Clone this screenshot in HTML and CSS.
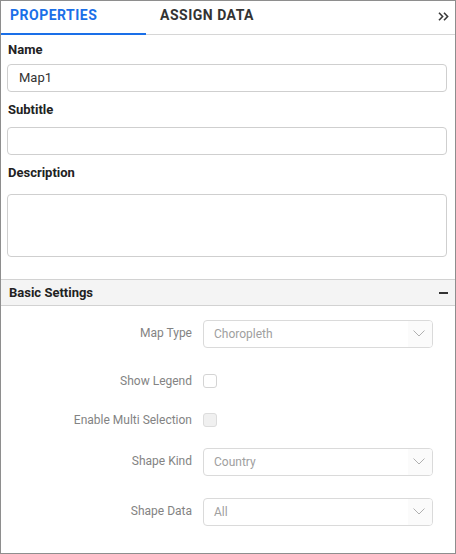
FILE: index.html
```html
<!DOCTYPE html>
<html>
<head>
<meta charset="utf-8">
<link rel="stylesheet" href="styles.css">
</head>
<body>
<div class="panel">
  <div class="tabs">
    <div class="tab active">PROPERTIES</div>
    <div class="tab second">ASSIGN DATA</div>
    <div class="collapse">
      <svg width="11" height="9" viewBox="0 0 11 9"><path d="M1 0.8 L4.6 4.5 L1 8.2 M6 0.8 L9.6 4.5 L6 8.2" fill="none" stroke="#3a3a3a" stroke-width="1.6"/></svg>
    </div>
  </div>
  <div class="fields">
    <div class="label l-name">Name</div>
    <div class="input i-name">Map1</div>
    <div class="label l-sub">Subtitle</div>
    <div class="input i-sub"></div>
    <div class="label l-desc">Description</div>
    <div class="textarea"></div>
  </div>
  <div class="section">
    <span class="section-title">Basic Settings</span>
    <span class="minus"></span>
  </div>
  <div class="settings">
    <div class="row r1">
      <div class="rlabel up">Map Type</div>
      <div class="dropdown"><span class="value">Choropleth</span><span class="arrow"><svg width="12" height="7" viewBox="0 0 12 7"><path d="M0.5 0.5 L6 6 L11.5 0.5" fill="none" stroke="#b0b0b0" stroke-width="1"/></svg></span></div>
    </div>
    <div class="row r2">
      <div class="rlabel">Show Legend</div>
      <div class="check"></div>
    </div>
    <div class="row r3">
      <div class="rlabel">Enable Multi Selection</div>
      <div class="check disabled"></div>
    </div>
    <div class="row r4">
      <div class="rlabel up">Shape Kind</div>
      <div class="dropdown"><span class="value">Country</span><span class="arrow"><svg width="12" height="7" viewBox="0 0 12 7"><path d="M0.5 0.5 L6 6 L11.5 0.5" fill="none" stroke="#b0b0b0" stroke-width="1"/></svg></span></div>
    </div>
    <div class="row r5">
      <div class="rlabel up">Shape Data</div>
      <div class="dropdown"><span class="value">All</span><span class="arrow"><svg width="12" height="7" viewBox="0 0 12 7"><path d="M0.5 0.5 L6 6 L11.5 0.5" fill="none" stroke="#b0b0b0" stroke-width="1"/></svg></span></div>
    </div>
  </div>
</div>
</body>
</html>
```

FILE: styles.css
```css
* { box-sizing: border-box; }
html, body { margin: 0; padding: 0; background: #fff; }
body { font-family: Roboto, "Liberation Sans", sans-serif; }

.panel {
  width: 456px;
  height: 554px;
  border: 1px solid #8e8e8e;
  background: #fff;
  overflow: hidden;
}

.tabs {
  display: flex;
  height: 34px;
  border-bottom: 1px solid #d6d6d6;
}
.tab {
  height: 34px;
  padding-top: 6px;
  font-size: 14px;
  line-height: 16px;
  font-weight: 700;
  letter-spacing: 0.5px;
  color: #333;
}
.tab.active {
  width: 145px;
  padding-left: 9px;
  color: #1a6fe8;
  border-bottom: 2px solid #1a6fe8;
}
.tab.second { padding-left: 14px; }
.collapse {
  margin-left: auto;
  padding-top: 11px;
  padding-right: 6px;
}
.collapse svg { display: block; }

.fields { padding: 0 8px 0 6px; }
.label {
  font-size: 13px;
  line-height: 16px;
  font-weight: 700;
  color: #222;
  padding-left: 1px;
}
.l-name { margin-top: 7px; }
.l-sub { margin-top: 10px; }
.l-desc { margin-top: 10px; }
.input {
  height: 28px;
  border: 1px solid #cfcfcf;
  border-radius: 4px;
  padding-left: 11px;
  font-size: 13px;
  line-height: 26px;
  color: #333;
}
.i-name { margin-top: 6px; }
.i-sub { margin-top: 9px; }
.textarea {
  margin-top: 13px;
  height: 63px;
  border: 1px solid #cfcfcf;
  border-radius: 4px;
}

.section {
  margin-top: 22px;
  height: 27px;
  border-top: 1px solid #d2d2d2;
  border-bottom: 1px solid #d2d2d2;
  background: #f4f4f4;
  display: flex;
  align-items: center;
  padding: 0 7px 0 8px;
}
.section-title {
  font-size: 13px;
  font-weight: 700;
  color: #222;
  line-height: 16px;
}
.minus {
  margin-left: auto;
  width: 9px;
  height: 2px;
  background: #333;
}

.row {
  display: flex;
  align-items: center;
}
.rlabel {
  width: 191px;
  text-align: right;
  font-size: 12px;
  line-height: 14px;
  color: #838383;
  margin-right: 11px;
  position: relative;
}
.rlabel.up { top: -1px; }
.r1 { margin-top: 14px; }
.r2 { margin-top: 26px; }
.r3 { margin-top: 25px; }
.r4 { margin-top: 21px; }
.r5 { margin-top: 22px; }

.dropdown {
  width: 230px;
  height: 28px;
  border: 1px solid #dadada;
  border-radius: 4px;
  display: flex;
  align-items: center;
  padding-left: 10px;
  overflow: hidden;
}
.value {
  font-size: 12px;
  color: #a0a0a0;
  line-height: 14px;
}
.arrow {
  margin-left: auto;
  width: 24px;
  height: 26px;
  background: #fbfbfb;
  display: flex;
  align-items: center;
  justify-content: center;
  padding-right: 2px;
  padding-bottom: 1px;
}
.arrow svg { display: block; }

.check {
  width: 14px;
  height: 14px;
  border: 1px solid #d4d4d4;
  border-radius: 3px;
  background: #fff;
}
.check.disabled {
  background: #f0f0f0;
  border-color: #dcdcdc;
}
```
